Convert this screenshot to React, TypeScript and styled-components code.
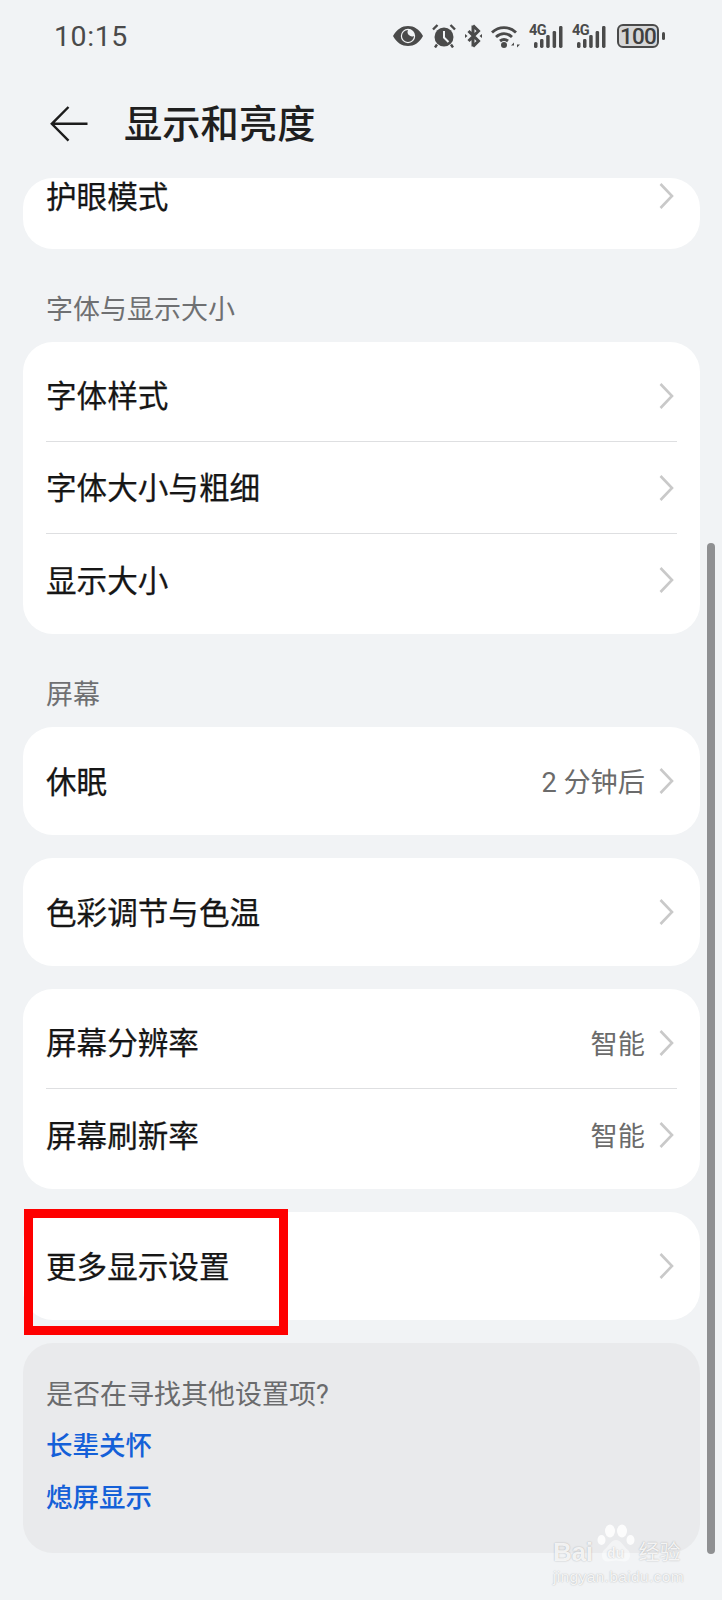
import React from 'react';
import styled, { createGlobalStyle } from 'styled-components';

const GlobalStyle = createGlobalStyle`
  html, body { margin: 0; padding: 0; background: #f1f3f5; }
  * { box-sizing: border-box; }
`;

const font = `Roboto, "Noto Sans CJK SC", sans-serif`;

const Screen = styled.div`
  position: relative;
  width: 722px;
  height: 1600px;
  overflow: hidden;
  background: #f1f3f5;
  font-family: ${font};
  color: #1c1c1c;
`;

const StatusBar = styled.div`
  height: 72px;
  padding: 0 63px 0 54px;
  display: flex;
  align-items: center;
  justify-content: space-between;
`;

const Clock = styled.span`
  font-size: 28.5px;
  color: #4a4a4a;
  letter-spacing: 0.6px;
`;

const StatusIcons = styled.div`
  display: flex;
  align-items: center;
  gap: 9px;
  color: #4a4a4a;
`;

const Header = styled.header`
  height: 106px;
  padding: 0 0 2px 50px;
  display: flex;
  align-items: center;
  gap: 36px;
`;

const Title = styled.h1`
  margin: 0 0 6px;
  font-size: 38.3px;
  font-weight: 500;
  color: #1f1f1f;
`;

const List = styled.main`
  padding: 0 22px 0 23px;
  display: flex;
  flex-direction: column;
`;

const Card = styled.section<{ $gap?: number; $pad?: number }>`
  background: #fff;
  border-radius: 30px;
  padding: ${p => p.$pad ?? 0}px 23px;
  margin-bottom: ${p => p.$gap ?? 23}px;
`;

const ClippedRow = styled.div`
  height: 71px;
  padding-bottom: 35px;
  display: flex;
  align-items: center;
  justify-content: space-between;
`;

const Row = styled.div<{ $line?: boolean; $h?: number }>`
  height: ${p => p.$h ?? 92}px;
  display: flex;
  align-items: center;
  justify-content: space-between;
  border-bottom: ${p => (p.$line ? '1px solid #dedfe1' : 'none')};
`;

const RowLabel = styled.span`
  font-size: 30.6px;
  color: #161616;
  margin-bottom: 3px;
  -webkit-text-stroke: 0.25px #161616;
`;

const RowRight = styled.span`
  display: flex;
  align-items: center;
  gap: 14px;
  margin-right: 3px;
`;

const RowValue = styled.span`
  font-size: 27.2px;
  color: #6b6b6b;
  margin-bottom: 2px;
`;

const SectionLabel = styled.div`
  height: 93px;
  padding: 24px 23px 0;
  display: flex;
  align-items: center;
  font-size: 27px;
  color: #6f7072;
`;

const SuggestCard = styled.section`
  background: #e9eaec;
  border-radius: 30px;
  height: 210px;
  padding: 24px 23px 0;
`;

const SuggestTitle = styled.div`
  height: 50px;
  display: flex;
  align-items: center;
  font-size: 27px;
  color: #6a6b6d;
`;

const SuggestLink = styled.div`
  height: 52px;
  display: flex;
  align-items: center;
  font-size: 26.5px;
  font-weight: 500;
  color: #1460d8;
`;

const Scrollbar = styled.div`
  position: absolute;
  left: 707px;
  top: 543px;
  width: 8px;
  height: 1011px;
  border-radius: 4px;
  background: #8f9092;
`;

const Highlight = styled.div`
  position: absolute;
  left: 24px;
  top: 1209px;
  width: 264px;
  height: 126px;
  border: 9px solid #fe0000;
`;

const Watermark = styled.div`
  position: absolute;
  left: 553px;
  top: 1523px;
  width: 130px;
  color: rgba(255, 255, 255, 0.85);
  text-shadow: 0 0 1.5px rgba(0, 0, 0, 0.3);
  font-family: "Liberation Sans", "Noto Sans CJK SC", sans-serif;
`;

const WatermarkTop = styled.div`
  display: flex;
  align-items: flex-end;
  gap: 4px;
  height: 40px;
`;

const WatermarkBai = styled.span`
  font-size: 26px;
  font-weight: 700;
  line-height: 22px;
  letter-spacing: -0.3px;
`;

const WatermarkCn = styled.span`
  font-size: 21px;
  line-height: 23px;
`;

const WatermarkUrl = styled.div`
  font-size: 15.5px;
  letter-spacing: 0.35px;
  line-height: 16px;
  margin-top: 6px;
  white-space: nowrap;
`;

const PawLetters = styled.text`
  font-family: "Liberation Sans", sans-serif;
  font-size: 14px;
  font-weight: 700;
  fill: currentColor;
`;

const Chevron = () => (
  <svg width="15" height="26" viewBox="0 0 15 26" fill="none">
    <path d="M1.5 1 L13 13 L1.5 25" stroke="#c9c9c9" strokeWidth="2.6" />
  </svg>
);

const BackArrow = () => (
  <svg width="38" height="36" viewBox="0 0 38 36" fill="none">
    <path d="M18.5 1 L1.8 17.8 L18.5 34.6 M2 17.8 H37.5" stroke="#1c1c1c" strokeWidth="2.4" />
  </svg>
);

const EyeIcon = () => (
  <svg width="30" height="22" viewBox="0 0 30 22">
    <path fill="currentColor" fillRule="evenodd" d="M0 11 C4 4 9 1 15 1 C21 1 26 4 30 11 C26 18 21 21 15 21 C9 21 4 18 0 11 Z M15 3.8 A7.2 7.2 0 1 0 15 18.2 A7.2 7.2 0 1 0 15 3.8 Z" />
    <path fill="currentColor" d="M15 5 A6 6 0 1 0 21 11 A4.5 4.5 0 0 1 15 5 Z" />
  </svg>
);

const AlarmIcon = () => (
  <svg width="24" height="24" viewBox="0 0 24 24">
    <circle cx="12" cy="13" r="9.5" fill="currentColor" />
    <path d="M12 7 V13.5 L16.5 18" stroke="#f1f3f5" strokeWidth="2" fill="none" />
    <path d="M1 5.5 L5.5 1 M23 5.5 L18.5 1 M5 20.5 L3 23.5 M19 20.5 L21 23.5" stroke="currentColor" strokeWidth="2.4" fill="none" />
  </svg>
);

const BluetoothIcon = () => (
  <svg width="17" height="24" viewBox="0 0 17 24">
    <path d="M8 1.5 L13.5 7 L3.5 17 M8 22.5 L13.5 17 L3.5 7 M8 1.5 V22.5" stroke="currentColor" strokeWidth="3" fill="none" />
    <path d="M0 10 L2.5 12 L0 14 Z M17 10 L14.5 12 L17 14 Z" fill="currentColor" />
  </svg>
);

const WifiIcon = () => (
  <svg width="29" height="23" viewBox="0 0 29 23" fill="none">
    <path d="M1 7.5 C8 1 18 1 25 7.5 M5 12 C10 7.5 16 7.5 21 12 M9 16 C11.5 14 14.5 14 17 16" stroke="currentColor" strokeWidth="2.9" />
    <circle cx="13" cy="20" r="3" fill="currentColor" />
    <path d="M20 20.5 L23 17.5 V20.5 Z M29 19.5 L26 22.5 V19.5 Z" fill="currentColor" />
  </svg>
);

const SignalWrap = styled.span`
  position: relative;
  display: block;
  width: 34px;
  height: 23px;
`;

const SignalBadge = styled.span`
  position: absolute;
  left: 0;
  top: 0;
  font-size: 14.5px;
  line-height: 12px;
  font-weight: 700;
  letter-spacing: -0.6px;
`;

const SignalIcon = () => (
  <SignalWrap>
    <SignalBadge>4G</SignalBadge>
    <svg width="34" height="23" viewBox="0 0 34 23">
      <rect x="5" y="17" width="3.5" height="6" rx="1.6" fill="currentColor" />
      <rect x="11" y="14" width="3.5" height="9" rx="1.4" fill="currentColor" />
      <rect x="17.2" y="10" width="3.5" height="13" rx="1.4" fill="currentColor" />
      <rect x="23.6" y="6" width="3.5" height="17" rx="1.4" fill="currentColor" />
      <rect x="30" y="1" width="3.5" height="22" rx="1.4" fill="currentColor" />
    </svg>
  </SignalWrap>
);

const Battery = styled.span`
  position: relative;
  width: 42px;
  height: 24px;
  margin-left: 2px;
  border: 2px solid #4a4a4a;
  border-radius: 6px;
  background: #d6d6d7;
  display: flex;
  align-items: center;
  justify-content: center;
  font-size: 22.5px;
  font-weight: 500;
  letter-spacing: -0.8px;
  color: #3f3f3f;
  &::after {
    content: '';
    position: absolute;
    right: -8px;
    top: 6px;
    width: 3px;
    height: 8px;
    border-radius: 2px;
    background: #4a4a4a;
  }
`;

const Paw = () => (
  <svg width="38" height="40" viewBox="0 0 38 40" fill="currentColor">
    <ellipse cx="13" cy="8" rx="5" ry="6.5" />
    <ellipse cx="25" cy="8" rx="5" ry="6.5" />
    <ellipse cx="4.5" cy="17" rx="4" ry="5" />
    <ellipse cx="33.5" cy="17" rx="4" ry="5" />
    <path d="M19 17 C24 17 26 23 31 27 C35 31 33 39 27 38.5 L19 37.5 L11 38.5 C5 39 3 31 7 27 C12 23 14 17 19 17 Z" opacity="0.55" />
    <PawLetters x="10" y="35">du</PawLetters>
  </svg>
);

type Item = { label: string; value?: string; line?: boolean; h?: number };

const ListRow = ({ label, value, line, h }: Item) => (
  <Row $line={line} $h={h}>
    <RowLabel>{label}</RowLabel>
    <RowRight>
      {value && <RowValue>{value}</RowValue>}
      <Chevron />
    </RowRight>
  </Row>
);

export default function App() {
  return (
    <Screen>
      <GlobalStyle />
      <StatusBar>
        <Clock>10:15</Clock>
        <StatusIcons>
          <EyeIcon />
          <AlarmIcon />
          <BluetoothIcon />
          <WifiIcon />
          <SignalIcon />
          <SignalIcon />
          <Battery>100</Battery>
        </StatusIcons>
      </StatusBar>
      <Header>
        <BackArrow />
        <Title>显示和亮度</Title>
      </Header>
      <List>
        <Card $gap={0}>
          <ClippedRow>
            <RowLabel>护眼模式</RowLabel>
            <RowRight><Chevron /></RowRight>
          </ClippedRow>
        </Card>
        <SectionLabel>字体与显示大小</SectionLabel>
        <Card $gap={0} $pad={8}>
          <ListRow label="字体样式" line />
          <ListRow label="字体大小与粗细" line />
          <ListRow label="显示大小" />
        </Card>
        <SectionLabel>屏幕</SectionLabel>
        <Card>
          <ListRow label="休眠" value="2 分钟后" h={108} />
        </Card>
        <Card>
          <ListRow label="色彩调节与色温" h={108} />
        </Card>
        <Card $pad={8}>
          <ListRow label="屏幕分辨率" value="智能" line />
          <ListRow label="屏幕刷新率" value="智能" />
        </Card>
        <Card>
          <ListRow label="更多显示设置" h={108} />
        </Card>
        <SuggestCard>
          <SuggestTitle>是否在寻找其他设置项?</SuggestTitle>
          <SuggestLink>长辈关怀</SuggestLink>
          <SuggestLink>熄屏显示</SuggestLink>
        </SuggestCard>
      </List>
      <Scrollbar />
      <Highlight />
      <Watermark>
        <WatermarkTop>
          <WatermarkBai>Bai</WatermarkBai>
          <Paw />
          <WatermarkCn>经验</WatermarkCn>
        </WatermarkTop>
        <WatermarkUrl>jingyan.baidu.com</WatermarkUrl>
      </Watermark>
    </Screen>
  );
}
